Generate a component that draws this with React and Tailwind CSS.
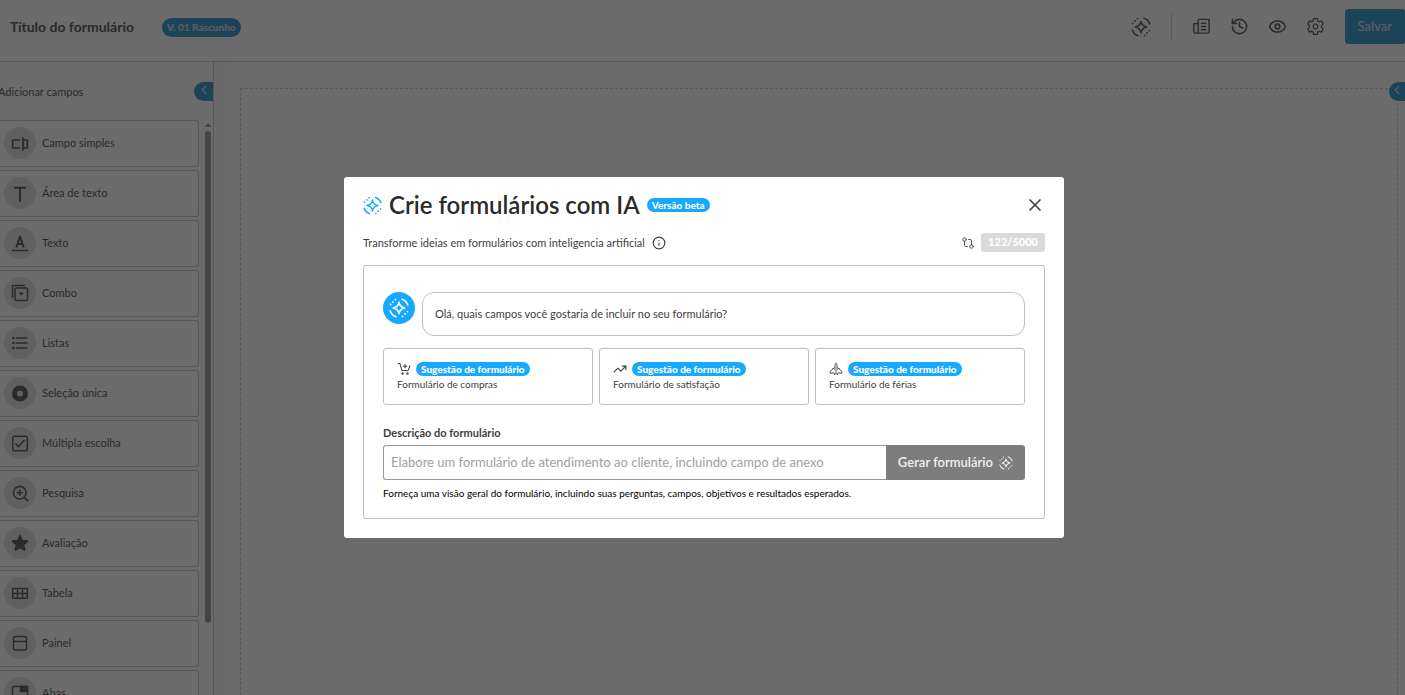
import { ChevronLeft, Eye, GitCompare, History, Info, TrendingUp, X, ZoomIn } from 'lucide-react'
import { IoSettingsOutline } from 'react-icons/io5'
import { MdFormatListBulleted } from 'react-icons/md'

function AiIcon({ size = 20, className = '' }) {
  return (
    <svg width={size} height={size} viewBox="0 0 20 20" fill="none" className={className} aria-hidden="true">
      <path
        d="M10 4.200c.6 3.800 2 5.200 5.800 5.800-3.800.6-5.200 2-5.800 5.800-.6-3.800-2-5.200-5.800-5.800 3.800-.6 5.200-2 5.800-5.800Z"
        stroke="currentColor"
        strokeWidth="1.5"
        strokeLinejoin="round"
      />
      <path
        d="M13 1.200a9.300 9.300 0 0 1 5.800 5.800M7 18.800a9.300 9.300 0 0 1-5.800-5.800"
        stroke="currentColor"
        strokeWidth="1.5"
        strokeLinecap="round"
      />
      <g fill="currentColor">
        <circle cx="6.4" cy="1.6" r=".9" />
        <circle cx="4" cy="4" r=".9" />
        <circle cx="1.6" cy="6.4" r=".9" />
        <circle cx="18.4" cy="13.6" r=".9" />
        <circle cx="16" cy="16" r=".9" />
        <circle cx="13.6" cy="18.4" r=".9" />
      </g>
    </svg>
  )
}

function Glyph({ size = 20, children }) {
  return (
    <svg
      width={size}
      height={size}
      viewBox="0 0 20 20"
      fill="none"
      stroke="currentColor"
      strokeWidth="1.5"
      strokeLinejoin="round"
      aria-hidden="true"
    >
      {children}
    </svg>
  )
}

const FIELDS = [
  {
    label: 'Campo simples',
    icon: (
      <Glyph>
        <path d="M10 7H2.700v8H10M13 7h4.300v8H13M13 4.500v13" strokeWidth="1.7" />
      </Glyph>
    ),
  },
  {
    label: 'Área de texto',
    icon: (
      <Glyph>
        <path d="M4 4.800h12M10 4.800V19" strokeWidth="2" />
      </Glyph>
    ),
  },
  {
    label: 'Texto',
    icon: (
      <Glyph>
        <path d="M2 17.500h16" />
        <path d="m6.300 14.500 3.700-11 3.700 11M7.500 11h5" strokeWidth="2" />
      </Glyph>
    ),
  },
  {
    label: 'Combo',
    icon: (
      <Glyph>
        <rect x="5" y="5" width="12.5" height="12.5" rx="1" />
        <path d="M2.500 15V2.500H15" />
        <path d="M9 9.800h4.500l-2.200 2.600Z" fill="currentColor" strokeWidth=".5" />
      </Glyph>
    ),
  },
  { label: 'Listas', icon: <MdFormatListBulleted size={20} /> },
  {
    label: 'Seleção única',
    icon: (
      <Glyph>
        <circle cx="10" cy="10.5" r="5.5" strokeWidth="5" />
      </Glyph>
    ),
  },
  {
    label: 'Múltipla escolha',
    icon: (
      <Glyph>
        <rect x="2.8" y="3.3" width="14.5" height="14.5" rx="1.5" />
        <path d="m5.500 10.500 3 3 6-6.500" strokeWidth="1.7" />
      </Glyph>
    ),
  },
  { label: 'Pesquisa', icon: <ZoomIn size={19} /> },
  {
    label: 'Avaliação',
    icon: (
      <Glyph>
        <path
          d="m10 2.500 2.300 5 5.400.6-4 3.700 1.100 5.400-4.800-2.700-4.800 2.700 1.100-5.400-4-3.700 5.400-.6Z"
          fill="currentColor"
        />
      </Glyph>
    ),
  },
  {
    label: 'Tabela',
    icon: (
      <Glyph>
        <path d="M2.700 5.500h14.600v9.800H2.700ZM2.700 10.400h14.600M7.500 5.500v9.800M12.500 5.500v9.800" />
      </Glyph>
    ),
  },
  {
    label: 'Painel',
    icon: (
      <Glyph>
        <rect x="3.5" y="3.5" width="13" height="13.5" rx="2" />
        <path d="M3.500 8.500h13" />
      </Glyph>
    ),
  },
  {
    label: 'Abas',
    icon: (
      <Glyph>
        <rect x="2.5" y="3.5" width="15" height="14" rx="1" />
        <path d="M10.500 3.500h7v5h-7Z" fill="currentColor" />
      </Glyph>
    ),
  },
]

const SUGGESTIONS = [
  {
    label: 'Formulário de compras',
    icon: (
      <Glyph size={14}>
        <path d="M1 2h3l3 10h9l2.500-7M11.500 3v6M8.500 6h6" />
        <circle cx="8" cy="16.5" r="1" />
        <circle cx="15" cy="16.5" r="1" />
      </Glyph>
    ),
  },
  { label: 'Formulário de satisfação', icon: <TrendingUp size={14} /> },
  {
    label: 'Formulário de férias',
    icon: (
      <Glyph size={14}>
        <path
          d="M10 1.500c1.200 1.500 1.500 3 1.500 6l3 2.500V8.500M10 1.500C8.800 3 8.500 4.500 8.500 7.500l-3 2.500V8.500M14.500 10l4 3.500v2.500l-5.500-.5-1 1.500M5.500 10l-4 3.500v2.500l5.500-.5 1 1.500M8.500 7.500V12M11.500 7.500V12M10 12v4M7 18.300l3-1.800 3 1.800"
          strokeWidth="1.3"
        />
      </Glyph>
    ),
  },
]

function Header() {
  return (
    <header className="flex h-[62px] shrink-0 items-start justify-between border-b border-[#d0d0d0] pl-[10px]">
      <div className="flex h-[54px] items-center gap-7">
        <h1 className="text-sm font-bold">Título do formulário</h1>
        <span className="flex h-[19px] items-center rounded-full bg-[#43a2d4] px-[5px] text-[10px] font-black text-[#dedede]">
          V. 01 Rascunho
        </span>
      </div>
      <div className="flex h-[53px] items-center">
        <button type="button" aria-label="Criar com IA" className="mr-5">
          <AiIcon size={20} />
        </button>
        <div className="mr-5 h-7 w-px bg-[#d6d6d6]" />
        <div className="mr-5 flex items-center gap-[19px]">
          <button type="button" aria-label="Documentação">
            <Glyph size={19}>
              <path d="M6.500 2.500H18v13a1.500 1.500 0 0 1-1.500 1.500h-13A1.500 1.500 0 0 1 2 15.500V7h4.500M6.500 2.500V17M9.500 6.500h5.500M9.500 10h5.500M9.500 13.500h5.500" />
            </Glyph>
          </button>
          <button type="button" aria-label="Histórico">
            <History size={19} />
          </button>
          <button type="button" aria-label="Visualizar">
            <Eye size={19} />
          </button>
          <button type="button" aria-label="Configurações">
            <IoSettingsOutline size={19} />
          </button>
        </div>
        <button
          type="button"
          className="h-[35px] rounded-[3px] bg-[#43a2d4] px-[13px] text-[13px] font-medium text-[#dedede]"
        >
          Salvar
        </button>
      </div>
    </header>
  )
}

function Sidebar() {
  return (
    <aside className="flex w-[214px] shrink-0 flex-col border-r border-[#d0d0d0]">
      <div className="flex h-[58px] shrink-0 items-center justify-between">
        <h2 className="-ml-[2px] pt-[2px] text-[11px]">Adicionar campos</h2>
        <button
          type="button"
          aria-label="Recolher campos"
          className="flex h-[19px] w-[19px] items-center justify-center rounded-l-full bg-[#43a2d4] pb-[3px] text-[#dedede]"
        >
          <ChevronLeft size={14} />
        </button>
      </div>
      <div className="flex min-h-0 grow">
        <ul className="flex grow flex-col gap-[3px] overflow-hidden">
          {FIELDS.map((field) => (
            <li
              key={field.label}
              className="flex h-[47px] shrink-0 items-center gap-[6px] rounded-r-[3px] border border-l-0 border-[#d0d0d0] pb-px pl-1 text-[11px]"
            >
              <span className="flex size-8 items-center justify-center rounded-full bg-[#e4e4e4]">{field.icon}</span>
              {field.label}
            </li>
          ))}
        </ul>
        <div className="ml-[6px] mr-[2px] flex w-[6px] flex-col items-center gap-1 pt-[3px] text-[#a5a5a5]">
          <svg width="6" height="4" viewBox="0 0 6 4" fill="currentColor" aria-hidden="true">
            <path d="M3 0 6 4H0Z" />
          </svg>
          <div className="h-[86%] w-full rounded-full bg-[#a5a5a5]" />
        </div>
      </div>
    </aside>
  )
}

function Badge({ children }) {
  return (
    <span className="flex h-[14px] items-center rounded-full bg-[#17a9ff] px-[5px] text-[10px] font-black text-white">
      {children}
    </span>
  )
}

function AiDialog() {
  return (
    <section
      role="dialog"
      aria-labelledby="ai-title"
      className="w-full max-w-[720px] rounded-[3px] bg-white px-[19px] pb-[19px] pt-[14px] text-[#404040]"
    >
      <div className="flex h-7 items-center justify-between">
        <div className="flex items-center gap-[7px]">
          <AiIcon size={19} className="text-[#17a9ff]" />
          <h2 id="ai-title" className="text-2xl leading-7 font-semibold text-[#2b2b2b]">
            Crie formulários com IA
          </h2>
          <Badge>Versão beta</Badge>
        </div>
        <button type="button" aria-label="Fechar">
          <X size={20} strokeWidth={2} />
        </button>
      </div>

      <div className="mt-[14px] flex h-[19px] items-center justify-between">
        <p className="flex items-center gap-[7px] pt-px text-[11px]">
          Transforme ideias em formulários com inteligencia artificial
          <Info size={14} />
        </p>
        <div className="flex items-center gap-[6px]">
          <GitCompare size={14} strokeWidth={1.5} />
          <span className="flex h-[19px] items-center rounded-[3px] bg-[#dadada] px-[7px] text-[11px] font-black text-white">
            122/5000
          </span>
        </div>
      </div>

      <div className="mt-[13px] rounded-[3px] border border-[#c0c0c0] px-[19px] pb-[18px] pt-[26px]">
        <div className="flex items-start gap-[7px]">
          <span className="flex size-8 shrink-0 items-center justify-center rounded-full bg-[#17a9ff] text-white">
            <AiIcon size={20} />
          </span>
          <p className="flex h-11 grow items-center rounded-xl border border-[#c0c0c0] px-3 pt-px text-[11px]">
            Olá, quais campos você gostaria de incluir no seu formulário?
          </p>
        </div>

        <div className="mt-3 grid grid-cols-3 gap-[6px]">
          {SUGGESTIONS.map((item) => (
            <button
              key={item.label}
              type="button"
              className="flex h-[57px] flex-col items-start rounded-[3px] border border-[#c0c0c0] px-[13px] pt-[13px] text-left"
            >
              <span className="flex items-center gap-[5px]">
                {item.icon}
                <Badge>Sugestão de formulário</Badge>
              </span>
              <span className="mt-[2px] text-[10px] leading-3">{item.label}</span>
            </button>
          ))}
        </div>

        <label htmlFor="descricao" className="mt-[21px] block text-[11px] leading-[14px] font-bold">
          Descrição do formulário
        </label>
        <div className="mt-[5px] flex h-[35px]">
          <input
            id="descricao"
            type="text"
            placeholder="Elabore um formulário de atendimento ao cliente, incluindo campo de anexo"
            className="min-w-0 grow rounded-l-[3px] border border-r-0 border-[#999] px-[7px] pt-px text-[13px] placeholder:text-[#a0a0a0]"
          />
          <button
            type="button"
            className="flex shrink-0 items-center gap-[6px] rounded-r-[3px] bg-[#7d7d7d] px-3 text-[13px] font-semibold text-[#f0f0f0]"
          >
            Gerar formulário
            <AiIcon size={14} />
          </button>
        </div>
        <p className="mt-[6px] text-[10px] leading-[14px] text-black">
          Forneça uma visão geral do formulário, incluindo suas perguntas, campos, objetivos e resultados esperados.
        </p>
      </div>
    </section>
  )
}

export default function App() {
  return (
    <div className="relative flex h-screen flex-col overflow-hidden bg-white font-['Lato',sans-serif] text-[#666]">
      <Header />
      <div className="flex min-h-0 grow">
        <Sidebar />
        <main className="flex min-w-0 grow bg-[#fcfcfc] pl-[13px]">
          <div className="flex grow bg-white pl-[13px] pr-[7px] pt-[26px]">
            <div className="grow border border-b-0 border-dashed border-[#cfcfcf]" />
          </div>
        </main>
        <button
          type="button"
          aria-label="Abrir propriedades"
          className="absolute right-0 top-[82px] flex h-[19px] w-4 items-center justify-center rounded-l-full bg-[#43a2d4] pb-[3px] text-[#dedede]"
        >
          <ChevronLeft size={14} />
        </button>
      </div>
      <div className="absolute inset-0 flex items-center justify-center bg-black/58 pl-[3px] pt-5">
        <AiDialog />
      </div>
    </div>
  )
}
